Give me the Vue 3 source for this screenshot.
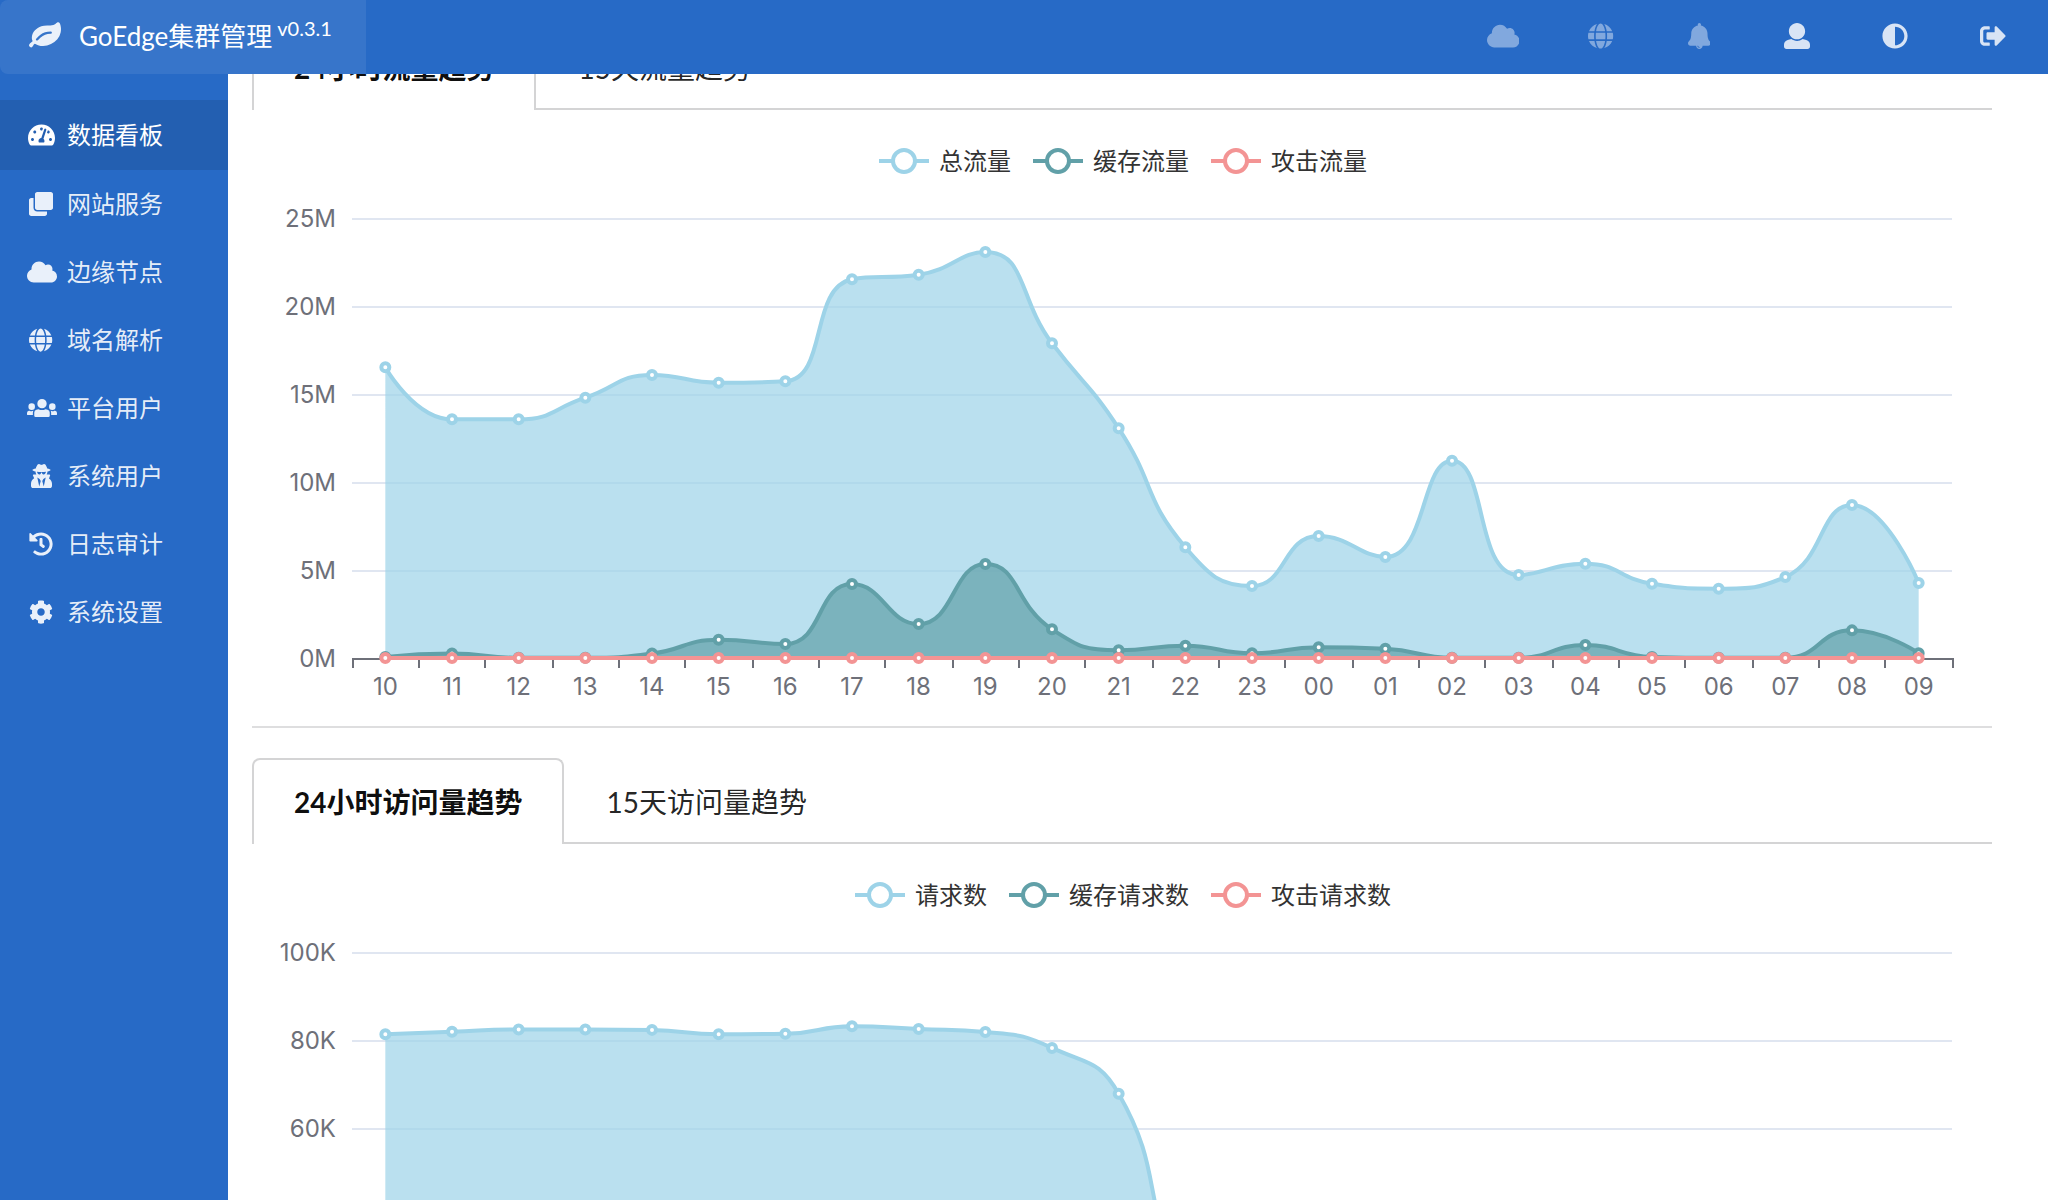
<script setup>
import { computed, onBeforeUnmount, onMounted, ref } from 'vue'

const icons = {
  leaf: { w: 1792, h: 1792, d: 'M1280 704q0-26-19-45t-45-19q-172 0-318 49.5t-259.5 134-235.5 219.5q-19 21-19 45 0 26 19 45t45 19q24 0 45-19 27-24 74-71t67-66q137-124 268.5-176t313.5-52q26 0 45-19t19-45zm512-198q0 95-20 193-46 224-184.5 383t-357.5 268q-214 108-438 108-148 0-286-47-15-5-88-42t-96-37q-16 0-39.5 32t-45 70-52.5 70-60 32q-43 0-63.5-17.5t-45.5-59.5q-2-4-6-11t-5.5-10-3-9.5-1.5-13.5q0-35 31-73.5t68-65.5 68-56 31-48q0-4-14-38t-16-44q-9-51-9-104 0-115 43.5-220t119-184.5 170.5-139 204-95.5q55-18 145-25.5t179.5-9 178.5-6 163.5-24 113.5-56.5l29.5-29.5 29.5-28 27-20 36.5-16 43.5-4.5q39 0 70.5 46t47.5 112 24 124 8 96z' },
  dashboard: { w: 576, h: 512, d: 'M288 32C128.94 32 0 160.94 0 320c0 52.8 14.25 102.26 39.06 144.8 5.61 9.62 16.3 15.2 27.44 15.2h443c11.14 0 21.83-5.58 27.44-15.2C561.75 422.26 576 372.8 576 320c0-159.06-128.94-288-288-288zm0 64c14.71 0 26.58 10.13 30.32 23.65-1.11 2.26-2.64 4.23-3.45 6.67l-9.22 27.67c-5.13 3.49-10.97 6.01-17.64 6.01-17.67 0-32-14.33-32-32S270.33 96 288 96zM96 384c-17.67 0-32-14.33-32-32s14.33-32 32-32 32 14.33 32 32-14.33 32-32 32zm48-160c-17.67 0-32-14.33-32-32s14.33-32 32-32 32 14.33 32 32-14.33 32-32 32zm246.77-72.41l-61.33 184C343.13 347.33 352 364.54 352 384c0 11.72-3.38 22.55-8.88 32H232.88c-5.5-9.45-8.88-20.28-8.88-32 0-33.94 26.5-61.43 59.9-63.59l61.34-184.01c4.17-12.56 17.73-19.45 30.36-15.17 12.57 4.19 19.35 17.79 15.17 30.36zm14.66 57.2l15.52-46.55c3.47-1.29 7.13-2.23 11.05-2.23 17.67 0 32 14.33 32 32s-14.33 32-32 32c-11.38-.01-20.89-6.28-26.57-15.22zM480 384c-17.67 0-32-14.33-32-32s14.33-32 32-32 32 14.33 32 32-14.33 32-32 32z' },
  clone: { w: 512, h: 512, d: 'M464 0c26.51 0 48 21.49 48 48v288c0 26.51-21.49 48-48 48H176c-26.51 0-48-21.49-48-48V48c0-26.51 21.49-48 48-48h288M176 416c-44.112 0-80-35.888-80-80V128H48c-26.51 0-48 21.49-48 48v288c0 26.51 21.49 48 48 48h288c26.51 0 48-21.49 48-48v-48H176z' },
  cloud: { w: 640, h: 512, d: 'M537.6 226.6c4.1-10.7 6.4-22.4 6.4-34.6 0-53-43-96-96-96-19.7 0-38.1 6-53.3 16.2C367 64.2 315.3 32 256 32c-88.4 0-160 71.6-160 160 0 2.7.1 5.4.2 8.1C40.2 219.8 0 273.2 0 336c0 79.5 64.5 144 144 144h368c70.7 0 128-57.3 128-128 0-61.9-44-113.6-102.4-125.4z' },
  globe: { w: 496, h: 512, d: 'M336.5 160C322 70.7 287.8 8 248 8s-74 62.7-88.5 152h177zM152 256c0 22.2 1.2 43.5 3.3 64h185.3c2.1-20.5 3.3-41.8 3.3-64s-1.2-43.5-3.3-64H155.3c-2.1 20.5-3.3 41.8-3.3 64zm324.7-96c-28.6-67.9-86.5-120.4-158-141.6 24.4 33.8 41.2 84.7 50 141.6h108zM177.2 18.4C105.8 39.6 47.8 92.1 19.3 160h108c8.7-56.9 25.5-107.8 49.9-141.6zM487.4 192H372.7c2.1 21 3.3 42.5 3.3 64s-1.2 43-3.3 64h114.6c5.5-20.5 8.6-41.8 8.6-64s-3.1-43.5-8.5-64zM120 256c0-21.5 1.2-43 3.3-64H8.6C3.2 212.5 0 233.8 0 256s3.2 43.5 8.6 64h114.6c-2-21-3.2-42.5-3.2-64zm39.5 96c14.5 89.3 48.7 152 88.5 152s74-62.7 88.5-152h-177zm159.3 141.6c71.4-21.2 129.4-73.7 158-141.6h-108c-8.8 56.9-25.6 107.8-50 141.6zM19.3 352c28.6 67.9 86.5 120.4 158 141.6-24.4-33.8-41.2-84.7-50-141.6h-108z' },
  users: { w: 640, h: 512, d: 'M220 163a100 100 0 1 0 200 0a100 100 0 1 0-200 0zM245 280Q320 320 395 280l45 11Q485 303 485 350V420Q485 450 455 450H185Q155 450 155 420V350Q155 303 200 291zM30 227a70 70 0 1 0 140 0a70 70 0 1 0-140 0zM470 227a70 70 0 1 0 140 0a70 70 0 1 0-140 0zM0 365Q0 325 40 316l15-4Q95 335 135 314Q125 340 125 365V407H20Q0 407 0 387zM640 365Q640 325 600 316l-15-4Q545 335 505 314Q515 340 515 365V407H620Q640 407 640 387z' },
  secret: { w: 448, h: 512, d: 'M383.9 308.3l23.9-62.6c4-10.5-3.7-21.7-15-21.7h-58.5c11-18.9 17.8-40.6 17.8-64v-.3c39.2-7.8 64-19.1 64-31.7 0-13.3-27.3-25.1-70.1-33-9.2-32.8-27-65.8-40.6-82.8-9.5-11.9-25.9-15.6-39.5-8.8l-27.6 13.8c-9 4.5-19.6 4.5-28.6 0L182.1 3.4c-13.6-6.8-30-3.1-39.5 8.8-13.5 17-31.4 50-40.6 82.8-42.7 7.9-70 19.7-70 33 0 12.6 24.8 23.9 64 31.7v.3c0 23.4 6.8 45.1 17.8 64H56.3c-11.5 0-19.2 11.7-14.7 22.3l25.8 60.2C27.3 329.8 0 372.7 0 422.4v44.8C0 491.9 20.1 512 44.8 512h358.4c24.7 0 44.8-20.1 44.8-44.8v-44.8c0-48.4-25.8-90.4-64.1-114.1zM176 480l-41.6-192 49.6 32 24 40-32 120zm96 0l-32-120 24-40 49.6-32L272 480zm41.7-298.5c-3.9 11.9-7 24.6-16.5 33.4-10.1 9.3-48 22.4-64-25-2.8-8.4-15.4-8.4-18.3 0-17 50.2-56 32.4-64 25-9.5-8.8-12.7-21.5-16.5-33.4-.8-2.5-6.3-5.7-6.3-5.8v-10.8c28.3 3.6 61 5.8 96 5.8s67.7-2.1 96-5.8v10.8c-.1.1-5.6 3.2-6.4 5.8z' },
  history: { w: 512, h: 512, d: 'M504 255.531c.253 136.64-111.18 248.372-247.82 248.468-59.015.042-113.223-20.53-155.822-54.911-11.077-8.94-11.905-25.541-1.839-35.607l11.267-11.267c8.609-8.609 22.353-9.551 31.891-1.984C173.062 425.135 212.781 440 256 440c101.705 0 184-82.311 184-184 0-101.705-82.311-184-184-184-48.814 0-93.149 18.969-126.068 49.932l50.754 50.754c10.08 10.08 2.941 27.314-11.313 27.314H24c-8.837 0-16-7.163-16-16V38.627c0-14.254 17.234-21.393 27.314-11.314l49.372 49.372C129.209 34.136 189.552 8 256 8c136.81 0 247.747 110.781 248 247.531zm-180.912 78.784l9.823-12.63c8.138-10.463 6.253-25.542-4.21-33.679L288 256.349V152c0-13.255-10.745-24-24-24h-16c-13.255 0-24 10.745-24 24v135.651l65.409 50.874c10.463 8.137 25.541 6.253 33.679-4.21z' },
  cog: { w: 512, h: 512, d: 'M487.4 315.7l-42.6-24.6c4.3-23.2 4.3-47 0-70.2l42.6-24.6c4.9-2.8 7.1-8.6 5.5-14-11.1-35.6-30-67.8-54.7-94.6-3.8-4.1-10-5.1-14.8-2.3L380.8 110c-17.9-15.4-38.5-27.3-60.8-35.1V25.8c0-5.6-3.9-10.5-9.4-11.7-36.7-8.2-74.3-7.8-109.2 0-5.5 1.2-9.4 6.1-9.4 11.7V75c-22.2 7.9-42.8 19.8-60.8 35.1L88.7 85.5c-4.9-2.8-11-1.9-14.8 2.3-24.7 26.7-43.6 58.9-54.7 94.6-1.7 5.4.6 11.2 5.5 14L67.3 221c-4.3 23.2-4.3 47 0 70.2l-42.6 24.6c-4.9 2.8-7.1 8.6-5.5 14 11.1 35.6 30 67.8 54.7 94.6 3.8 4.1 10 5.1 14.8 2.3l42.6-24.6c17.9 15.4 38.5 27.3 60.8 35.1v49.2c0 5.6 3.9 10.5 9.4 11.7 36.7 8.2 74.3 7.8 109.2 0 5.5-1.2 9.4-6.1 9.4-11.7v-49.2c22.2-7.9 42.8-19.8 60.8-35.1l42.6 24.6c4.9 2.8 11 1.9 14.8-2.3 24.7-26.7 43.6-58.9 54.7-94.6 1.5-5.5-.7-11.3-5.6-14.1zM256 336c-44.1 0-80-35.9-80-80s35.9-80 80-80 80 35.9 80 80-35.9 80-80 80z' },
  bell: { w: 448, h: 512, d: 'M433.884 366.059C411.634 343.809 384 316.118 384 208c0-79.394-57.831-145.269-133.663-157.83A31.845 31.845 0 0 0 256 32c0-17.673-14.327-32-32-32s-32 14.327-32 32c0 6.75 2.095 13.008 5.663 18.17C121.831 62.731 64 128.606 64 208c0 108.118-27.643 135.809-49.893 158.059C-16.042 396.208 5.325 448 48.048 448H160c0 35.346 28.654 64 64 64s64-28.654 64-64h111.943c42.638 0 64.151-51.731 33.941-81.941zM224 472a8 8 0 0 1 0 16c-22.056 0-40-17.944-40-40h16c0 13.234 10.766 24 24 24z' },
  user: { w: 512, h: 512, d: 'M256 0c88.366 0 160 71.634 160 160s-71.634 160-160 160S96 248.366 96 160 167.634 0 256 0zm183.283 333.821l-71.313-17.828c-74.923 53.89-165.738 41.864-223.94 0l-71.313 17.828C29.981 344.505 0 382.903 0 426.955V464c0 26.51 21.49 48 48 48h416c26.51 0 48-21.49 48-48v-37.045c0-44.052-29.981-82.45-72.717-93.134z' },
  contrast: { w: 512, h: 512, d: 'M8 256c0 136.966 111.033 248 248 248s248-111.034 248-248S392.966 8 256 8 8 119.033 8 256zm248 184V72c101.705 0 184 82.311 184 184 0 101.705-82.311 184-184 184z' },
  signout: { w: 512, h: 512, d: 'M497 273L329 441c-15 15-41 4.5-41-17v-96H152c-13.3 0-24-10.7-24-24v-96c0-13.3 10.7-24 24-24h136V88c0-21.4 25.9-32 41-17l168 168c9.3 9.4 9.3 24.6 0 34zM192 436v-40c0-6.6-5.4-12-12-12H96c-17.7 0-32-14.3-32-32V160c0-17.7 14.3-32 32-32h84c6.6 0 12-5.4 12-12V76c0-6.6-5.4-12-12-12H96c-53 0-96 43-96 96v192c0 53 43 96 96 96h84c6.6 0 12-5.4 12-12z' },
}

const box = (name) => `0 0 ${icons[name].w} ${icons[name].h}`
const iconWidth = (name, height) => (icons[name].w / icons[name].h) * height

const menu = [
  { icon: 'dashboard', label: '数据看板', active: true },
  { icon: 'clone', label: '网站服务' },
  { icon: 'cloud', label: '边缘节点' },
  { icon: 'globe', label: '域名解析' },
  { icon: 'users', label: '平台用户' },
  { icon: 'secret', label: '系统用户' },
  { icon: 'history', label: '日志审计' },
  { icon: 'cog', label: '系统设置' },
]

const tools = [
  { icon: 'cloud', label: '节点', dim: true },
  { icon: 'globe', label: '域名', dim: true },
  { icon: 'bell', label: '消息', dim: true },
  { icon: 'user', label: '用户' },
  { icon: 'contrast', label: '主题' },
  { icon: 'signout', label: '退出' },
]

const BLUE = '#9dd3e8'
const TEAL = '#61a0a8'
const RED = '#f39494'
const hours = Array.from({ length: 24 }, (_, i) => String((i + 10) % 24).padStart(2, '0'))
const zeros = new Array(24).fill(0)

const panels = [
  {
    id: 'traffic',
    tabs: ['24小时流量趋势', '15天流量趋势'],
    max: 25,
    ticks: [25, 20, 15, 10, 5, 0],
    unit: 'M',
    series: [
      { name: '总流量', color: BLUE, data: [16.52, 13.56, 13.56, 14.79, 16.08, 15.64, 15.72, 21.52, 21.78, 23.07, 17.88, 13.05, 6.29, 4.09, 6.93, 5.74, 11.21, 4.72, 5.36, 4.22, 3.94, 4.6, 8.69, 4.26] },
      { name: '缓存流量', color: TEAL, data: [0.06, 0.25, 0.01, 0.01, 0.25, 1.04, 0.8, 4.2, 1.93, 5.34, 1.63, 0.44, 0.7, 0.27, 0.61, 0.53, 0.01, 0.01, 0.74, 0.06, 0.01, 0.01, 1.57, 0.27] },
      { name: '攻击流量', color: RED, data: zeros },
    ],
  },
  {
    id: 'requests',
    tabs: ['24小时访问量趋势', '15天访问量趋势'],
    max: 100,
    ticks: [100, 80, 60, 40, 20, 0],
    unit: 'K',
    series: [
      { name: '请求数', color: BLUE, data: [81.3, 81.9, 82.4, 82.4, 82.3, 81.3, 81.4, 83.1, 82.5, 81.8, 78.2, 67.8, 25, 14, 15, 13, 20, 11, 12, 10, 9, 11, 18, 10] },
      { name: '缓存请求数', color: TEAL, data: [2, 3, 2, 2, 3, 4, 4, 8, 5, 9, 5, 2, 3, 2, 2, 2, 1, 1, 2, 1, 1, 1, 4, 2] },
      { name: '攻击请求数', color: RED, data: zeros },
    ],
  },
]

/* Plot geometry, in CSS pixels inside each chart's svg */
const plot = { left: 100, right: 40, top: 41, height: 440 }
const chartHost = ref(null)
const width = ref(1740)
let observer

onMounted(() => {
  width.value = chartHost.value.clientWidth
  observer = new ResizeObserver(([entry]) => { width.value = Math.round(entry.contentRect.width) })
  observer.observe(chartHost.value)
})
onBeforeUnmount(() => observer.disconnect())

const step = computed(() => (width.value - plot.left - plot.right) / hours.length)
/* Tick marks are 2px wide and sit on even pixels so they stay crisp */
const tickX = (n) => Math.floor((plot.left + step.value * n + 0.01) / 2) * 2 + 1
const clamp = (v, a, b) => Math.min(Math.max(v, Math.min(a, b)), Math.max(a, b))

/* Bezier smoothing whose control points never leave the neighbouring segment */
function smoothPath(pts) {
  const k = 0.5
  let d = `M${pts[0].x} ${pts[0].y}`
  let c0 = { ...pts[0] }
  for (let i = 1; i < pts.length; i++) {
    const prev = pts[i - 1]
    const p = pts[i]
    const next = pts[i + 1]
    let c1 = { ...p }
    let following = { ...p }
    if (next) {
      const lp = Math.hypot(p.x - prev.x, p.y - prev.y)
      const ln = Math.hypot(next.x - p.x, next.y - p.y)
      const r = ln / (ln + lp)
      following = {
        x: clamp(p.x + (next.x - prev.x) * k * r, p.x, next.x),
        y: clamp(p.y + (next.y - prev.y) * k * r, p.y, next.y),
      }
      c1 = {
        x: clamp(p.x - ((following.x - p.x) * lp) / ln, prev.x, p.x),
        y: clamp(p.y - ((following.y - p.y) * lp) / ln, prev.y, p.y),
      }
      following = {
        x: p.x + ((p.x - c1.x) * ln) / lp,
        y: p.y + ((p.y - c1.y) * ln) / lp,
      }
    }
    d += `C${c0.x} ${c0.y} ${c1.x} ${c1.y} ${p.x} ${p.y}`
    c0 = following
  }
  return d
}

const charts = computed(() => panels.map((panel) => {
  const base = plot.top + plot.height
  return {
    ...panel,
    rows: panel.ticks.map((t) => ({ label: `${t}${panel.unit}`, y: base - (t / panel.max) * plot.height, zero: t === 0 })),
    lines: panel.series.map((s) => {
      const pts = s.data.map((v, i) => ({ x: plot.left + step.value * (i + 0.5), y: base - (v / panel.max) * plot.height }))
      const line = smoothPath(pts)
      return { ...s, pts, line, area: `${line}L${pts[pts.length - 1].x} ${base}L${pts[0].x} ${base}Z` }
    }),
  }
}))
</script>

<template>
  <div class="shell">
    <header class="topbar">
      <a class="brand" href="#">
        <svg class="brand-icon" width="32" height="32" :viewBox="box('leaf')" aria-hidden="true"><path :d="icons.leaf.d" /></svg>
        <span class="brand-name">GoEdge集群管理<sup>v0.3.1</sup></span>
      </a>
      <nav class="tools" aria-label="工具">
        <a v-for="t in tools" :key="t.icon" href="#" class="tool" :class="{ dim: t.dim }" :aria-label="t.label">
          <svg :width="iconWidth(t.icon, 26)" height="26" :viewBox="box(t.icon)" aria-hidden="true"><path :d="icons[t.icon].d" /></svg>
        </a>
      </nav>
    </header>

    <nav class="sidebar" aria-label="主菜单">
      <a v-for="m in menu" :key="m.icon" href="#" class="menu-item" :class="{ active: m.active }">
        <span class="menu-icon">
          <svg :width="iconWidth(m.icon, 24)" height="24" :viewBox="box(m.icon)" aria-hidden="true"><path :d="icons[m.icon].d" /></svg>
        </span>
        <span>{{ m.label }}</span>
      </a>
    </nav>

    <main class="content">
      <div ref="chartHost" class="panels">
        <section v-for="c in charts" :key="c.id" class="panel">
          <div class="tabs">
            <a v-for="(tab, i) in c.tabs" :key="tab" href="#" class="tab" :class="{ active: i === 0 }">{{ tab }}</a>
          </div>
          <div class="legend">
            <button v-for="s in c.lines" :key="s.name" type="button" class="legend-item">
              <svg width="50" height="28" viewBox="0 0 50 28" aria-hidden="true">
                <path d="M0 14H50" :stroke="s.color" stroke-width="4" />
                <circle cx="25" cy="14" r="11" fill="#fff" :stroke="s.color" stroke-width="4" />
              </svg>
              <span>{{ s.name }}</span>
            </button>
          </div>
          <svg class="chart" height="549" role="img" :aria-label="c.tabs[0]">
            <g class="grid">
              <template v-for="r in c.rows" :key="r.label">
                <line v-if="!r.zero" :x1="plot.left" :x2="width - plot.right" :y1="r.y + 1" :y2="r.y + 1" />
              </template>
            </g>
            <g class="axis">
              <line :x1="plot.left" :x2="width - plot.right + 2" :y1="plot.top + plot.height + 1" :y2="plot.top + plot.height + 1" />
              <line
                v-for="n in hours.length + 1"
                :key="n"
                :x1="tickX(n - 1)"
                :x2="tickX(n - 1)"
                :y1="plot.top + plot.height"
                :y2="plot.top + plot.height + 10"
              />
            </g>
            <g class="labels">
              <text v-for="r in c.rows" :key="r.label" class="end" :x="plot.left - 16" :y="r.y + 9">{{ r.label }}</text>
              <text v-for="(h, i) in hours" :key="h" class="mid" :x="plot.left + step * (i + 0.5)" :y="plot.top + plot.height + 37">{{ h }}</text>
            </g>
            <path v-for="s in c.lines" :key="`${s.name}-area`" :d="s.area" :fill="s.color" fill-opacity="0.7" />
            <g v-for="s in c.lines" :key="s.name" :stroke="s.color" stroke-width="4">
              <path :d="s.line" fill="none" stroke-linejoin="bevel" />
              <circle v-for="(p, i) in s.pts" :key="i" :cx="p.x" :cy="p.y" r="4" fill="#fff" />
            </g>
          </svg>
        </section>
      </div>
    </main>
  </div>
</template>

<style>
body {
  margin: 0;
  background: #fff;
}
</style>

<style scoped>
.shell {
  min-height: 100vh;
  display: flex;
  font-family: Lato, "Noto Sans CJK SC", sans-serif;
}

a {
  color: inherit;
  text-decoration: none;
}

/* Fixed bar: the page content scrolls underneath it */
.topbar {
  position: fixed;
  inset: 0 0 auto 0;
  z-index: 2;
  height: 74px;
  display: flex;
  justify-content: space-between;
  background: #276ac6;
  color: #fff;
}

.brand {
  display: flex;
  align-items: center;
  box-sizing: border-box;
  width: 366px;
  padding: 0 0 2px 29px;
  gap: 18px;
  background: rgba(255, 255, 255, 0.08);
  border-radius: 8px 0 0 8px;
  font-size: 26px;
  line-height: 32px;
  white-space: nowrap;
}

.brand-icon {
  fill: rgba(255, 255, 255, 0.9);
}

.brand-name sup {
  margin-left: 5px;
  font-size: 20px;
  line-height: 0;
}

.tools {
  display: flex;
  padding: 0 6px 2px 0;
}

.tool {
  width: 98px;
  display: flex;
  align-items: center;
  justify-content: center;
  fill: rgba(255, 255, 255, 0.82);
}

.tool.dim {
  fill: rgba(255, 255, 255, 0.42);
}

.sidebar {
  flex: none;
  box-sizing: border-box;
  width: 228px;
  padding-top: 100px;
  background: #276ac6;
}

.menu-item {
  display: flex;
  align-items: center;
  gap: 12px;
  height: 68px;
  padding-left: 27px;
  color: rgba(255, 255, 255, 0.9);
  fill: currentColor;
  font-size: 24px;
  line-height: 32px;
}

.menu-item.active {
  height: 70px;
  background: rgba(0, 0, 0, 0.1);
  color: #fff;
}

.menu-icon {
  width: 28px;
  display: flex;
  justify-content: safe center;
}

.menu-icon svg {
  flex: none;
}

.content {
  flex: 1;
  min-width: 0;
  padding: 24px 56px 0 24px;
}

.panel + .panel {
  border-top: 2px solid #dededf;
  padding-top: 30px;
}

.tabs {
  display: flex;
  height: 84px;
  border-bottom: 2px solid #d4d4d5;
}

.tab {
  box-sizing: border-box;
  height: 86px;
  padding: 24px 40px;
  border: 2px solid transparent;
  border-bottom: 0;
  color: rgba(0, 0, 0, 0.87);
  font-size: 28px;
  line-height: 36px;
  white-space: nowrap;
}

.tab.active {
  border-color: #d4d4d5;
  border-radius: 8px 8px 0 0;
  background: #fff;
  color: rgba(0, 0, 0, 0.95);
  font-weight: 700;
}

.legend {
  display: flex;
  justify-content: center;
  gap: 22px;
  padding: 35px 0 0 2px;
}

.legend-item {
  display: flex;
  align-items: center;
  gap: 10px;
  height: 32px;
  padding: 0;
  border: 0;
  background: none;
  color: #333;
  font-family: "Noto Sans CJK SC", sans-serif;
  font-size: 24px;
  line-height: 30px;
}

.legend-item span {
  padding-bottom: 2px;
}

.chart {
  display: block;
  width: 100%;
}

.grid line {
  stroke: #e0e6f1;
  stroke-width: 2px;
}

.axis line {
  stroke: #6e7079;
  stroke-width: 2px;
}

.labels text {
  fill: #6e7079;
  font-family: Inter, sans-serif;
  font-size: 24px;
}

.labels .end {
  text-anchor: end;
}

.labels .mid {
  text-anchor: middle;
}
</style>
